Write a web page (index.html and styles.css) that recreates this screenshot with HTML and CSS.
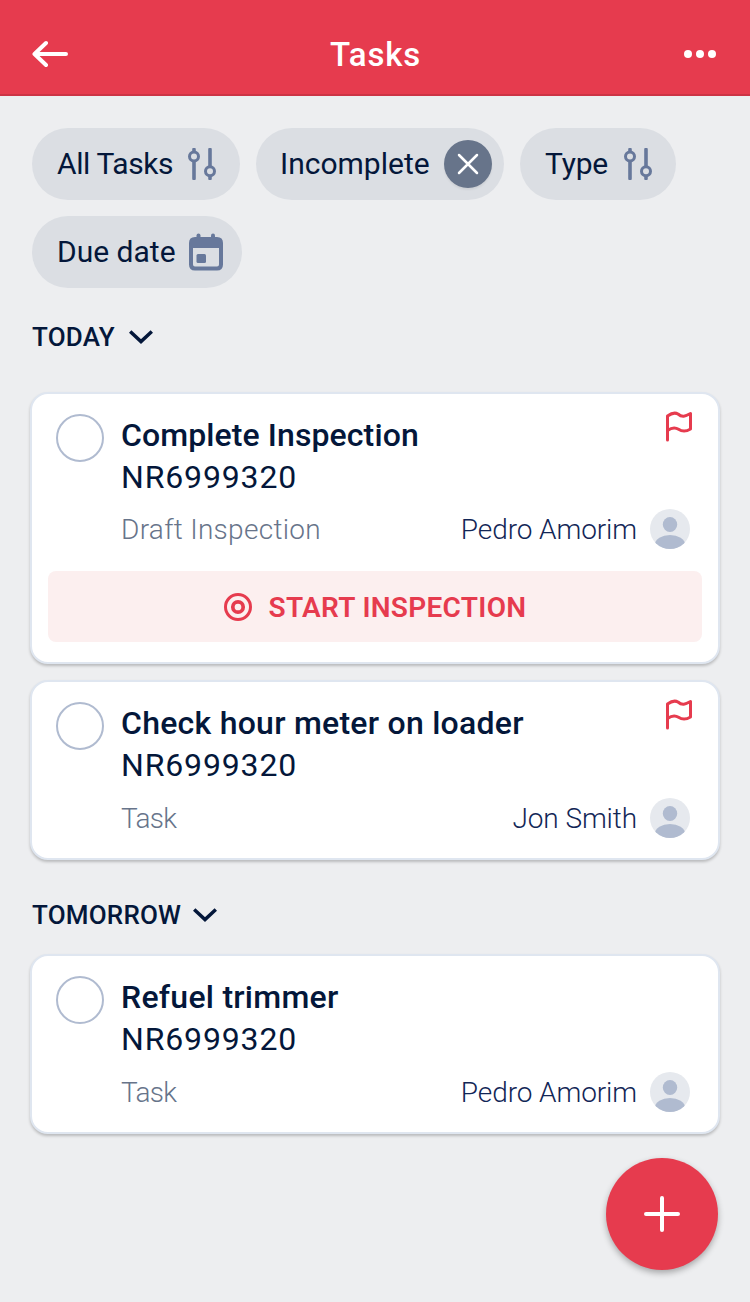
FILE: index.html
```html
<!DOCTYPE html>
<html lang="en">
<head>
    <meta charset="UTF-8">
    <meta name="viewport" content="width=device-width, initial-scale=1.0">
    <title>Tasks</title>
    <link rel="stylesheet" href="styles.css">
</head>
<body>
    <!-- shared icons -->
    <svg class="sprite" width="0" height="0">
        <symbol id="sliders" viewBox="0 0 28 32">
            <path d="M6 1.500V4M6 13V30.500M22 1.500V19M22 28V30.500" fill="none" stroke="#67789b" stroke-width="3.600" stroke-linecap="round"/>
            <circle cx="6" cy="8.500" r="4.500" fill="#dbdee3" stroke="#67789b" stroke-width="3"/>
            <circle cx="22" cy="23.300" r="4.500" fill="#dbdee3" stroke="#67789b" stroke-width="3"/>
        </symbol>
        <symbol id="chevron" viewBox="0 0 24 14">
            <path d="M1.200 1.500L12 11.500L22.800 1.500" fill="none" stroke="#04173a" stroke-width="3.500"/>
        </symbol>
        <symbol id="flag" viewBox="0 0 28 32">
            <path d="M1.500 29V5C5 2.500 8.500 1 12 3C16 6.500 19 5.500 24.500 2.500V18C20 20.800 16.500 21 12.500 18.300C9.500 16.300 5 17 1.500 19.500" fill="none" stroke="#e63b4e" stroke-width="3" stroke-linecap="round" stroke-linejoin="round"/>
        </symbol>
        <symbol id="avatar" viewBox="0 0 40 40">
            <clipPath id="round"><circle cx="20" cy="20" r="20"/></clipPath>
            <circle cx="20" cy="20" r="20" fill="#e6e9ee"/>
            <ellipse cx="20" cy="15.500" rx="7.200" ry="7.600" fill="#b0bbd0"/>
            <ellipse cx="20" cy="35" rx="15" ry="9" fill="#b0bbd0" clip-path="url(#round)"/>
        </symbol>
    </svg>

    <header class="header">
        <svg width="36" height="28" viewBox="0 0 36 28">
            <path d="M34 14H3M14 3L2.500 14L14 25" fill="none" stroke="#fff" stroke-width="4" stroke-linecap="round" stroke-linejoin="round"/>
        </svg>
        <h1 class="header-title">Tasks</h1>
        <svg width="36" height="8" viewBox="0 0 36 8" fill="#fff">
            <circle cx="6" cy="4" r="4"/><circle cx="18" cy="4" r="4"/><circle cx="30" cy="4" r="4"/>
        </svg>
    </header>

    <main class="content">
        <div class="filters">
            <div class="chip chip-all"><span>All Tasks</span><svg width="28" height="32"><use href="#sliders"/></svg></div>
            <div class="chip chip-incomplete">
                <span>Incomplete</span>
                <div class="chip-clear">
                    <svg width="22" height="22" viewBox="0 0 22 22"><path d="M2 2L20 20M20 2L2 20" stroke="#fff" stroke-width="2.500" stroke-linecap="round"/></svg>
                </div>
            </div>
            <div class="chip chip-type"><span>Type</span><svg width="28" height="32"><use href="#sliders"/></svg></div>
            <div class="chip chip-date">
                <span>Due date</span>
                <svg width="34" height="38" viewBox="0 0 34 38" fill="#67789b">
                    <rect x="7.500" y="0.500" width="4" height="8" rx="2"/>
                    <rect x="22" y="0.500" width="4" height="8" rx="2"/>
                    <path fill-rule="evenodd" d="M6 4H28Q34 4 34 10V31.500Q34 37.500 28 37.500H6Q0 37.500 0 31.500V10Q0 4 6 4ZM4 15V31.500Q4 33.500 6 33.500H28Q30 33.500 30 31.500V15Z"/>
                    <rect x="7.500" y="21" width="9.500" height="9" rx="1.500"/>
                </svg>
            </div>
        </div>

        <h2 class="section-title today">Today <svg width="24" height="14"><use href="#chevron"/></svg></h2>

        <div class="card card-action">
            <div class="task">
                <div class="check"></div>
                <div class="task-body">
                    <div class="task-head">
                        <div class="task-name name-complete">Complete Inspection</div>
                        <svg class="flag" width="28" height="32"><use href="#flag"/></svg>
                    </div>
                    <div class="task-number">NR6999320</div>
                    <div class="task-meta">
                        <span class="task-type type-draft">Draft Inspection</span>
                        <span class="assignee">Pedro Amorim</span>
                        <svg width="40" height="40"><use href="#avatar"/></svg>
                    </div>
                </div>
            </div>
            <button class="start">
                <svg width="28" height="28" viewBox="0 0 28 28" fill="none" stroke="#e63b4e">
                    <circle cx="14" cy="14" r="12.500" stroke-width="3"/>
                    <circle cx="14" cy="14" r="5.200" stroke-width="3.700"/>
                </svg>
                <span>START INSPECTION</span>
            </button>
        </div>

        <div class="card">
            <div class="task">
                <div class="check"></div>
                <div class="task-body">
                    <div class="task-head">
                        <div class="task-name">Check hour meter on loader</div>
                        <svg class="flag" width="28" height="32"><use href="#flag"/></svg>
                    </div>
                    <div class="task-number">NR6999320</div>
                    <div class="task-meta">
                        <span class="task-type">Task</span>
                        <span class="assignee">Jon Smith</span>
                        <svg width="40" height="40"><use href="#avatar"/></svg>
                    </div>
                </div>
            </div>
        </div>

        <h2 class="section-title tomorrow">Tomorrow <svg width="24" height="14"><use href="#chevron"/></svg></h2>

        <div class="card">
            <div class="task">
                <div class="check"></div>
                <div class="task-body">
                    <div class="task-head">
                        <div class="task-name">Refuel trimmer</div>
                    </div>
                    <div class="task-number">NR6999320</div>
                    <div class="task-meta">
                        <span class="task-type">Task</span>
                        <span class="assignee">Pedro Amorim</span>
                        <svg width="40" height="40"><use href="#avatar"/></svg>
                    </div>
                </div>
            </div>
        </div>
    </main>

    <button class="fab" aria-label="Add task">
        <svg width="36" height="36" viewBox="0 0 36 36"><path d="M18 2V34M2 18H34" stroke="#fff" stroke-width="4" stroke-linecap="round"/></svg>
    </button>
</body>
</html>
```

FILE: styles.css
```css
* {
    box-sizing: border-box;
    margin: 0;
    padding: 0;
}

body {
    min-height: 1302px;
    font-family: Roboto, 'Liberation Sans', sans-serif;
    background: #edeef0;
    color: #04173a;
}

svg {
    display: block;
    flex-shrink: 0;
}

.sprite {
    position: absolute;
}

.header {
    display: flex;
    align-items: center;
    justify-content: space-between;
    height: 96px;
    padding: 14px 32px 0;
    background: #e63b4e;
    border-bottom: 2px solid #cc3345;
}

.header-title {
    padding: 2px 0 0 1px;
    font-size: 33px;
    font-weight: 500;
    line-height: 40px;
    letter-spacing: 0.8px;
    color: #fff;
}

.content {
    padding: 32px 30px 0;
}

.filters {
    display: flex;
    flex-wrap: wrap;
    gap: 16px;
    padding: 0 2px;
}

.chip {
    display: flex;
    align-items: center;
    justify-content: space-between;
    height: 72px;
    padding: 0 24px 0 25px;
    border-radius: 36px;
    background: #dbdee3;
    font-size: 30px;
    line-height: 36px;
    white-space: nowrap;
}

.chip-all {
    width: 208px;
    letter-spacing: -0.4px;
}

.chip-incomplete {
    width: 248px;
    padding: 0 12px 0 24px;
}

.chip-type {
    width: 156px;
    letter-spacing: -0.2px;
}

.chip-date {
    width: 210px;
    padding-right: 19px;
}

.chip-clear {
    display: flex;
    align-items: center;
    justify-content: center;
    width: 48px;
    height: 48px;
    border-radius: 50%;
    background: #67748a;
    box-shadow: 0 2px 2px rgba(0, 0, 0, 0.06);
}

.section-title {
    display: flex;
    align-items: center;
    gap: 14px;
    padding-left: 2px;
    font-size: 26px;
    font-weight: 500;
    line-height: 32px;
    letter-spacing: 0.2px;
    text-transform: uppercase;
}

.today {
    margin: 33px 0 39px;
}

.tomorrow {
    gap: 12px;
    margin: 39px 0 23px;
}

.card {
    margin-bottom: 16px;
    border: 2px solid #dfe6f0;
    border-radius: 18px;
    background: #fff;
    box-shadow: 0 2px 3px rgba(0, 0, 0, 0.22);
}

.task {
    display: flex;
    gap: 17px;
    padding: 20px 28px 20px 24px;
}

.check {
    flex-shrink: 0;
    width: 48px;
    height: 48px;
    border: 2px solid #b0bbd0;
    border-radius: 50%;
}

.task-body {
    flex: 1;
}

.task-head {
    display: flex;
    justify-content: space-between;
    height: 42px;
}

.task-name {
    font-size: 32px;
    font-weight: 500;
    line-height: 42px;
    letter-spacing: 0.25px;
    white-space: nowrap;
}

.name-complete {
    letter-spacing: 0.1px;
}

.flag {
    margin: -3px -4px 0 0;
}

.task-number {
    font-size: 32px;
    line-height: 42px;
    letter-spacing: 0.85px;
}

.task-meta {
    display: flex;
    align-items: center;
    gap: 13px;
    margin-top: 12px;
    height: 40px;
    font-size: 28px;
    font-weight: 300;
    line-height: 40px;
}

.task-type {
    flex: 1;
    padding-top: 2px;
    letter-spacing: -0.7px;
    color: #67748a;
}

.type-draft {
    letter-spacing: 0.3px;
}

.assignee {
    padding-top: 2px;
    letter-spacing: -0.1px;
    color: #122656;
}

.card-action .task {
    padding-bottom: 22px;
}

.card-action .task-meta {
    margin-top: 11px;
}

.start {
    display: flex;
    align-items: center;
    justify-content: center;
    gap: 17px;
    width: 654px;
    height: 71px;
    margin: 0 16px 20px;
    border: 0;
    border-radius: 8px;
    background: #fcefef;
    color: #e63b4e;
    font-family: inherit;
    font-size: 28px;
    font-weight: 600;
    letter-spacing: 0.3px;
}

.start span {
    padding-top: 2px;
}

.fab {
    position: fixed;
    right: 32px;
    bottom: 32px;
    display: flex;
    align-items: center;
    justify-content: center;
    width: 112px;
    height: 112px;
    border: 0;
    border-radius: 50%;
    background: #e63b4e;
    box-shadow: 0 3px 6px rgba(0, 0, 0, 0.3);
}
```
